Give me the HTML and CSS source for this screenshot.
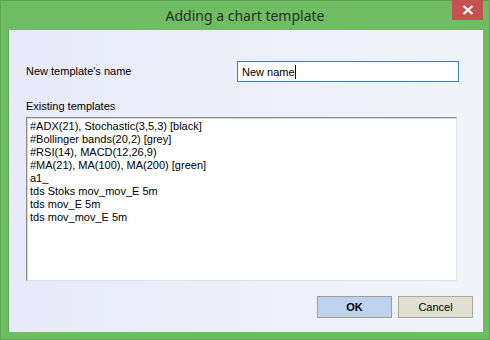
FILE: index.html
```html
<!DOCTYPE html>
<html>
<head>
<meta charset="utf-8">
<link rel="stylesheet" href="styles.css">
</head>
<body>
<div class="window">
  <div class="titlebar">
    <div class="title">Adding a chart template</div>
    <div class="close"><svg width="12" height="10" viewBox="0 0 12 10"><path d="M1.5 1 L10.5 9 M10.5 1 L1.5 9" stroke="#fff" stroke-width="2.2"/></svg></div>
  </div>
  <div class="client">
    <div class="name-row">
      <label class="lbl">New template's name</label>
      <div class="input">New name<span class="caret"></span></div>
    </div>
    <div class="lbl list-lbl">Existing templates</div>
    <div class="listbox">
      <div class="item">#ADX(21), Stochastic(3,5,3) [black]</div>
      <div class="item">#Bollinger bands(20,2) [grey]</div>
      <div class="item">#RSI(14), MACD(12,26,9)</div>
      <div class="item">#MA(21), MA(100), MA(200) [green]</div>
      <div class="item">a1_</div>
      <div class="item">tds Stoks mov_mov_E 5m</div>
      <div class="item">tds mov_E 5m</div>
      <div class="item">tds mov_mov_E 5m</div>
    </div>
    <div class="buttons">
      <div class="btn ok">OK</div>
      <div class="btn cancel">Cancel</div>
    </div>
  </div>
</div>
</body>
</html>
```

FILE: styles.css
```css
* { box-sizing: border-box; }
html, body { margin: 0; padding: 0; }
body { width: 490px; height: 340px; overflow: hidden; background: #6fbd62; }
.window {
  width: 490px; height: 340px;
  background: #6fbd62;
  border: 1px solid #5aa74d;
  display: flex; flex-direction: column;
}
.titlebar {
  height: 29px;
  position: relative;
  display: flex; align-items: center; justify-content: center;
}
.title {
  font-family: "Noto Sans", "Open Sans", sans-serif;
  font-size: 14px;
  color: #26301f;
  margin-top: -1px;
}
.close {
  position: absolute; right: 6px; top: -1px;
  width: 31px; height: 20px;
  background: #c75050;
  display: flex; align-items: center; justify-content: center;
}
.client {
  margin: 0 6px 0 7px;
  height: 302px;
  background: linear-gradient(to right, #e8eaf9, #f1f4fa);
  border-left: 1px solid #5da650;
  display: flex; flex-direction: column;
  padding: 31px 10px 12px 17px;
  font-family: "Liberation Sans", Arial, sans-serif;
  font-size: 11px;
  color: #000;
}
.name-row {
  display: flex; align-items: center; justify-content: space-between;
  height: 21px;
  padding-right: 14px;
}
.input {
  width: 222px; height: 21px;
  border: 1px solid #3d7bbb;
  background: #fff;
  padding: 3px 0 0 4px;
  line-height: 13px;
  font-size: 11px;
}
.caret { display: inline-block; width: 1px; height: 14px; background: #000; vertical-align: -3px; }
.lbl { line-height: 13px; font-size: 11px; }
.list-lbl { margin-top: 18px; }
.listbox {
  margin-top: 4px;
  margin-right: 16px;
  height: 164px;
  background: #fff;
  border-top: 1px solid #8a8a8a;
  border-left: 1px solid #8a8a8a;
  border-right: 1px solid #e3e3e3;
  border-bottom: 1px solid #e3e3e3;
  box-shadow: inset 1px 1px 0 #d8d8d8;
  padding: 2px 0 0 3px;
}
.item { line-height: 13px; height: 13px; font-size: 11px; white-space: nowrap; }
.buttons {
  margin-top: 15px;
  display: flex; justify-content: flex-end; gap: 6px;
}
.btn {
  width: 75px; height: 22px;
  display: flex; align-items: center; justify-content: center;
  font-size: 11px;
}
.ok { background: #bed2ef; border: 1px solid #a19f87; font-weight: bold; }
.cancel { background: #e1e0d2; border: 1px solid #a9a895; }
```
